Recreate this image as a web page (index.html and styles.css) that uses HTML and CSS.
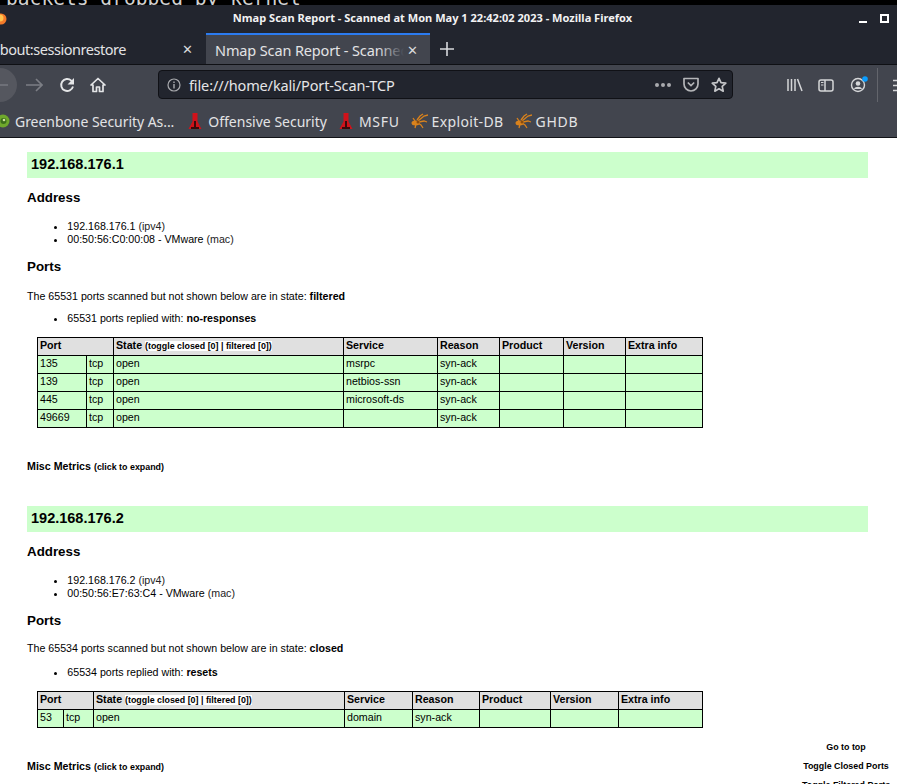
FILE: index.html
```html
<!DOCTYPE html>
<html lang="en">
<head>
<meta charset="utf-8">
<title>Nmap Scan Report</title>
<link rel="stylesheet" href="styles.css">
</head>
<body>
<div class="terminal"><span class="terminal-text">packets dropped by kernel</span></div>
<header class="chrome">
  <div class="titlebar">
    <svg class="fx" width="14" height="18" viewBox="0 0 14 18"><circle cx="1" cy="9" r="5.500" fill="#f47a2a"/><circle cx="0" cy="8" r="3.500" fill="#ffc34d"/></svg>
    <div class="title">Nmap Scan Report - Scanned at Mon May 1 22:42:02 2023 - Mozilla Firefox</div>
    <svg class="winbtns" width="40" height="14" viewBox="0 0 40 14"><rect x="1" y="8" width="8" height="2" fill="#fff"/><rect x="23" y="2" width="7" height="7" fill="none" stroke="#fff" stroke-width="2"/></svg>
  </div>
  <div class="tabs">
    <div class="tab tab-inactive"><span class="tab-text tab-text-first">about:sessionrestore</span><span class="tab-x">✕</span></div>
    <div class="tab tab-active"><span class="tab-clip"><span class="tab-text tab-text-active">Nmap Scan Report - Scanned at</span><span class="tab-fade"></span></span><span class="tab-x tab-x-active">✕</span></div>
    <svg class="plus" width="14" height="14" viewBox="0 0 14 14"><path d="M7 0v14M0 7h14" stroke="#d8d9dc" stroke-width="1.600"/></svg>
  </div>
  <div class="toolbar">
    <div class="nav">
      <div class="back"><svg width="16" height="14" viewBox="0 0 16 14"><path d="M7 1 1 7l6 6M1 7h15" fill="none" stroke="#777981" stroke-width="1.600"/></svg></div>
      <svg class="forward" width="17" height="14" viewBox="0 0 17 14"><path d="M10 1l6 6-6 6M16 7H0" fill="none" stroke="#7c7e85" stroke-width="1.600"/></svg>
      <svg class="reload" width="16" height="16" viewBox="0 0 16 16"><path d="M14 9.500A6 6 0 1 1 12.300 3.600L14 5.500" fill="none" stroke="#e4e5e7" stroke-width="1.900"/><path d="M15 1v6.500H8.500z" fill="#e4e5e7"/></svg>
      <svg class="home" width="16" height="16" viewBox="0 0 16 16"><path d="M8 1.500 1 8h2v6.500h3.500V10h3v4.500H13V8h2z" fill="none" stroke="#e4e5e7" stroke-width="1.700" stroke-linejoin="round"/></svg>
    </div>
    <div class="urlbar">
      <svg class="info" width="14" height="14" viewBox="0 0 14 14"><circle cx="7" cy="7" r="6" fill="none" stroke="#a9aaae" stroke-width="1.200"/><path d="M7 6v4.500M7 3.500v1.400" stroke="#a9aaae" stroke-width="1.400"/></svg>
      <span class="url">file:///home/kali/Port-Scan-TCP</span>
      <span class="dots"><i></i><i></i><i></i></span>
      <svg class="pocket" width="16" height="15" viewBox="0 0 16 15"><path d="M1 1.500h14V7a7 7 0 0 1-14 0z" fill="none" stroke="#b4b5b8" stroke-width="1.700" stroke-linejoin="round"/><path d="m4.800 5.500 3.200 3 3.200-3" fill="none" stroke="#b4b5b8" stroke-width="1.700"/></svg>
      <svg class="star" width="16" height="16" viewBox="0 0 16 16"><path d="m8 1.300 2 4.400 4.800.5-3.600 3.200 1 4.800L8 11.800l-4.200 2.400 1-4.800L1.200 6.200 6 5.700z" fill="none" stroke="#c5c6c9" stroke-width="1.700" stroke-linejoin="round"/></svg>
    </div>
    <div class="tools">
      <svg class="lib" width="16" height="14" viewBox="0 0 16 14"><path d="M1 1v12M4.500 1v12M8 1v12M10.500 1l4.500 12" stroke="#d5d6d8" stroke-width="1.500" fill="none"/></svg>
      <svg class="side" width="16" height="13" viewBox="0 0 16 13"><rect x="1" y="1" width="14" height="11" rx="2" fill="none" stroke="#d5d6d8" stroke-width="1.500"/><path d="M7 1v11" stroke="#d5d6d8" stroke-width="1.500"/><path d="M3 3.500h2.500M3 6h2.500" stroke="#d5d6d8"/></svg>
      <svg class="acct" width="20" height="18" viewBox="0 0 20 18"><circle cx="8" cy="10" r="6.500" fill="none" stroke="#d5d6d8" stroke-width="1.400"/><circle cx="8" cy="8.500" r="2.300" fill="#d5d6d8"/><path d="M4 14c1-3 7-3 8 0" fill="#d5d6d8"/><circle cx="15" cy="4" r="2.800" fill="#0a9dff"/></svg>
      <span class="sep"></span>
      <svg class="menu" width="12" height="13" viewBox="0 0 12 13"><path d="M0 1.500h12M0 6.500h12M0 11.500h12" stroke="#d5d6d8" stroke-width="1.600"/></svg>
    </div>
  </div>
  <div class="bookmarks">
    <span class="bm bm-first"><svg class="bm-icon" width="11" height="16" viewBox="0 0 11 16"><circle cx="3" cy="8" r="6.500" fill="#6fa82c"/><circle cx="3.500" cy="8" r="3" fill="#3c6e1c"/><circle cx="4" cy="7" r="1.300" fill="#cfe49c"/></svg>Greenbone Security As...</span>
    <span class="bm bm-r bm-offsec"><svg class="bm-icon" width="14" height="18" viewBox="0 0 14 18"><path d="M4.500 1h5v8.500l4 7.500H.5l4-7.500z" fill="#d0121a"/><path d="M6 9h2v6H6zM3 15h8v2H3z" fill="#3a0a0a"/></svg>Offensive Security</span>
    <span class="bm bm-r bm-msfu"><svg class="bm-icon" width="14" height="18" viewBox="0 0 14 18"><path d="M4.500 1h5v8.500l4 7.500H.5l4-7.500z" fill="#d0121a"/><path d="M6 9h2v6H6zM3 15h8v2H3z" fill="#3a0a0a"/></svg>MSFU</span>
    <span class="bm bm-s bm-edb"><svg class="bm-icon" width="18" height="16" viewBox="0 0 18 16"><g fill="none" stroke="#d9821c" stroke-width="1.300"><path d="M8 8 14 3l4-1M7 7l3-4 3-2M9 9l5-1 3 1M8 10l3 2 2 3M6 11l-1 4M5 8 3 5"/></g><ellipse cx="5.500" cy="10" rx="4" ry="2.500" fill="#d9821c"/><circle cx="8" cy="9" r="1.500" fill="#8a4c0e"/></svg>Exploit-DB</span>
    <span class="bm bm-s bm-ghdb"><svg class="bm-icon" width="18" height="16" viewBox="0 0 18 16"><g fill="none" stroke="#d9821c" stroke-width="1.300"><path d="M8 8 14 3l4-1M7 7l3-4 3-2M9 9l5-1 3 1M8 10l3 2 2 3M6 11l-1 4M5 8 3 5"/></g><ellipse cx="5.500" cy="10" rx="4" ry="2.500" fill="#d9821c"/><circle cx="8" cy="9" r="1.500" fill="#8a4c0e"/></svg>GHDB</span>
  </div>
</header>

<main class="page">
  <section class="host host-a">
    <h2 class="ip">192.168.176.1</h2>
    <h3 class="sub sub-address">Address</h3>
    <ul class="list list-addr">
      <li><span>192.168.176.1</span> <span class="olive">(ipv4)</span></li>
      <li><span>00:50:56:C0:00:08 - VMware</span> <span class="olive">(mac)</span></li>
    </ul>
    <h3 class="sub sub-ports">Ports</h3>
    <p class="state-line">The 65531 ports scanned but not shown below are in state: <b>filtered</b></p>
    <ul class="list list-reply"><li>65531 ports replied with: <b>no-responses</b></li></ul>
    <table class="ports ports-a">
      <colgroup><col class="c1"><col class="c2"><col class="c3"><col class="c4"><col class="c5"><col class="c6"><col class="c7"><col class="c8"></colgroup>
      <tr class="head"><th colspan="2">Port</th><th>State <span class="toggle">(toggle closed [0] | filtered [0])</span></th><th>Service</th><th>Reason</th><th>Product</th><th>Version</th><th>Extra info</th></tr>
      <tr><td>135</td><td>tcp</td><td>open</td><td>msrpc</td><td>syn-ack</td><td></td><td></td><td></td></tr>
      <tr><td>139</td><td>tcp</td><td>open</td><td>netbios-ssn</td><td>syn-ack</td><td></td><td></td><td></td></tr>
      <tr><td>445</td><td>tcp</td><td>open</td><td>microsoft-ds</td><td>syn-ack</td><td></td><td></td><td></td></tr>
      <tr><td>49669</td><td>tcp</td><td>open</td><td></td><td>syn-ack</td><td></td><td></td><td></td></tr>
    </table>
    <p class="misc misc-a">Misc Metrics <span class="expand">(click to expand)</span></p>
  </section>

  <section class="host host-b">
    <h2 class="ip">192.168.176.2</h2>
    <h3 class="sub sub-address">Address</h3>
    <ul class="list list-addr">
      <li><span>192.168.176.2</span> <span class="olive">(ipv4)</span></li>
      <li><span>00:50:56:E7:63:C4 - VMware</span> <span class="olive">(mac)</span></li>
    </ul>
    <h3 class="sub sub-ports">Ports</h3>
    <p class="state-line">The 65534 ports scanned but not shown below are in state: <b>closed</b></p>
    <ul class="list list-reply"><li>65534 ports replied with: <b>resets</b></li></ul>
    <table class="ports ports-b">
      <colgroup><col class="c1"><col class="c2"><col class="c3"><col class="c4"><col class="c5"><col class="c6"><col class="c7"><col class="c8"></colgroup>
      <tr class="head"><th colspan="2">Port</th><th>State <span class="toggle">(toggle closed [0] | filtered [0])</span></th><th>Service</th><th>Reason</th><th>Product</th><th>Version</th><th>Extra info</th></tr>
      <tr><td>53</td><td>tcp</td><td>open</td><td>domain</td><td>syn-ack</td><td></td><td></td><td></td></tr>
    </table>
    <p class="misc misc-b">Misc Metrics <span class="expand">(click to expand)</span></p>
  </section>

  <nav class="float-menu">
    <div>Go to top</div>
    <div>Toggle Closed Ports</div>
    <div>Toggle Filtered Ports</div>
  </nav>
</main>
</body>
</html>
```
FILE: styles.css
```css
* { box-sizing: border-box; }
html, body { margin: 0; padding: 0; height: 784px; overflow: hidden; background: #fff; }
body { font-family: "Liberation Sans", Arial, sans-serif; font-size: 10.67px; color: #000; position: relative; }

.terminal { height: 5px; background: #000; overflow: hidden; position: relative; }
.terminal-text { position: absolute; left: 6px; top: -11px; font: 19.600px/20px "DejaVu Sans Mono", monospace; color: #d0d0d0; white-space: nowrap; }

.chrome { font-family: "Noto Sans", sans-serif; color: #e8e8ea; }
.titlebar { height: 28px; background: #22252e; display: flex; align-items: flex-start; position: relative; }
.fx { position: absolute; left: 0; top: 5px; }
.title { width: 100%; text-align: center; font: 700 11.050px/26px "Noto Sans", sans-serif; color: #f2f2f3; padding-right: 32px; white-space: nowrap; }
.winbtns { position: absolute; right: -1px; top: 8px; }

.tabs { height: 32px; background: #22252e; display: flex; align-items: stretch; border-bottom: 1px solid #0f1014; position: relative; }
.tab { display: flex; align-items: center; position: relative; font-size: 14.500px; letter-spacing: -0.130px; }
.tab-inactive { width: 206px; color: #e2e3e5; }
.tab-active { width: 224px; background: #42454e; border-top: 2px solid #2b7bf0; color: #e2e3e5; }
.tab-text { white-space: nowrap; position: absolute; left: 10px; }
.tab-text-first { left: -8px; letter-spacing: -0.450px; }
.tab-clip { position: absolute; left: 0; top: 0; width: 198px; height: 100%; overflow: hidden; display: flex; align-items: center; }
.tab-text-active { left: 9px; }
.tab-fade { position: absolute; right: 0; top: 0; width: 26px; height: 100%; background: linear-gradient(to right, rgba(66,69,78,0), #42454e); }
.tab-x { position: absolute; left: 182px; font-size: 13px; color: #d8d9dc; }
.tab-x-active { left: 201px; }
.plus { align-self: center; margin-left: 10px; }

.toolbar { height: 40px; background: #42454e; display: flex; align-items: center; position: relative; }
.nav { width: 158px; height: 100%; position: relative; }
.back { position: absolute; left: -17px; top: 3px; width: 34px; height: 34px; border-radius: 50%; background: #55575f; display: flex; align-items: center; justify-content: center; }
.forward { position: absolute; left: 26px; top: 13px; }
.reload { position: absolute; left: 59px; top: 12px; }
.home { position: absolute; left: 90px; top: 12px; }
.urlbar { width: 575px; height: 29px; background: #22252e; border: 1px solid #101116; border-radius: 4px; display: flex; align-items: center; padding-left: 8px; margin-top: -1px; }
.info { flex: none; }
.url { margin-left: 8px; font-size: 14.500px; letter-spacing: -0.130px; color: #e6e6e8; flex: 1; white-space: nowrap; }
.dots { display: flex; gap: 2px; margin-right: 12px; }
.dots i { display: block; width: 4px; height: 4px; border-radius: 50%; background: #a9aaae; }
.pocket { margin-right: 12px; }
.star { margin-right: 5px; }
.tools { flex: 1; position: relative; height: 100%; }
.lib { position: absolute; left: 54px; top: 13px; }
.side { position: absolute; left: 85px; top: 14px; }
.acct { position: absolute; left: 117px; top: 10px; }
.sep { position: absolute; left: 144px; top: 3px; width: 1px; height: 34px; background: #63656c; }
.menu { position: absolute; left: 160px; top: 14px; }

.bookmarks { height: 33px; background: #42454e; display: flex; align-items: center; border-bottom: 1px solid #121317; padding-left: 15px; font-size: 14px; letter-spacing: -0.050px; color: #e2e3e5; position: relative; gap: 14px; }
.bm { display: inline-flex; align-items: center; gap: 5px; white-space: nowrap; }
.bm-icon { flex: none; }
.bm-r { gap: 6px; }
.bm-offsec { letter-spacing: 0; }
.bm-msfu { margin-left: -2px; letter-spacing: 0.700px; }
.bm-s { gap: 4px; margin-left: -3px; }
.bm-edb { margin-left: -4px; letter-spacing: 0.350px; }
.bm-ghdb { margin-left: -4px; letter-spacing: 0.700px; }
.bm-first { margin-left: -15px; gap: 4px; }

.page { position: relative; height: 646px; padding: 14px 0 0 27px; }
.host { width: 841px; }
.ip { margin: 0; height: 26px; background: #ccffcc; font: 700 14.500px/24px "Liberation Sans", sans-serif; padding-left: 4px; }
.sub { margin: 0; font: 700 13.330px/16px "Liberation Sans", sans-serif; }
.sub-address { margin-top: 12px; }
.sub-ports { margin-top: 13px; }
.list { margin: 0; padding: 0 0 0 40.300px; line-height: 13px; }
.list-addr { margin-top: 14px; }
.list-reply { margin-top: 9px; }
.olive { color: #222; }
.state-line { margin: 15px 0 0; line-height: 13px; }
.host-b .list-addr { margin-top: 14px; }
.host-b .state-line { margin-top: 13px; }
.host-b .list-reply { margin-top: 11px; }
.ports { border-collapse: collapse; table-layout: fixed; width: 665px; margin: 12px 0 0 10px; line-height: 12px; }
.ports th, .ports td { border: 1px solid #000; padding: 1px 2px; height: 18px; text-align: left; vertical-align: top; overflow: hidden; white-space: nowrap; font-size: 10.67px; }
.head th { background: #e0e0e0; font-weight: 700; }
.ports td { background: #ccffcc; }
.toggle { font-size: 8.900px; background: #fff; }
.ports-a .c1 { width: 49px; } .ports-a .c2 { width: 27px; } .ports-a .c3 { width: 230px; } .ports-a .c4 { width: 94px; }
.ports-a .c5 { width: 62px; } .ports-a .c6 { width: 64px; } .ports-a .c7 { width: 62px; } .ports-a .c8 { width: 77px; }
.ports-b .c1 { width: 26px; } .ports-b .c2 { width: 30px; } .ports-b .c3 { width: 251px; } .ports-b .c4 { width: 68px; }
.ports-b .c5 { width: 67px; } .ports-b .c6 { width: 71px; } .ports-b .c7 { width: 68px; } .ports-b .c8 { width: 84px; }
.misc { margin: 0; font-weight: 700; line-height: 14px; }
.misc-a { margin-top: 31px; padding-bottom: 32px; }
.misc-b { margin-top: 31px; }
.expand { font-size: 8.900px; }

.float-menu { position: absolute; right: 7px; top: 600px; width: 88px; font-size: 8.900px; font-weight: 700; text-align: center; line-height: 19px; white-space: nowrap; }
```
